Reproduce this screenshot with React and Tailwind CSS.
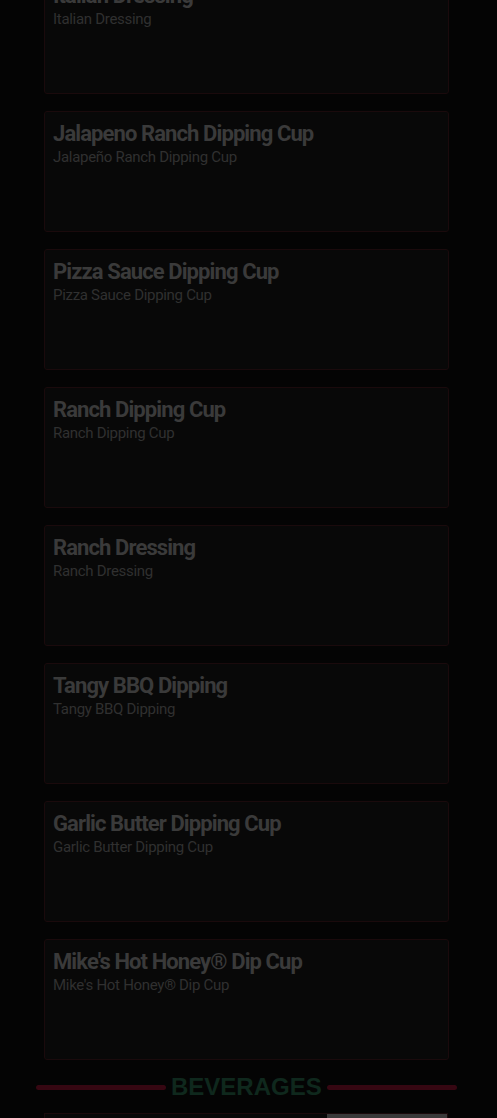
const items = [
  { title: "Italian Dressing", sub: "Italian Dressing" },
  { title: "Jalapeno Ranch Dipping Cup", sub: "Jalapeño Ranch Dipping Cup" },
  { title: "Pizza Sauce Dipping Cup", sub: "Pizza Sauce Dipping Cup" },
  { title: "Ranch Dipping Cup", sub: "Ranch Dipping Cup" },
  { title: "Ranch Dressing", sub: "Ranch Dressing" },
  { title: "Tangy BBQ Dipping", sub: "Tangy BBQ Dipping" },
  { title: "Garlic Butter Dipping Cup", sub: "Garlic Butter Dipping Cup" },
  { title: "Mike's Hot Honey® Dip Cup", sub: "Mike's Hot Honey® Dip Cup" },
];

function MenuCard({ title, sub }) {
  return (
    <div className="h-[121px] border border-[#1a0a0c] bg-[#080808] rounded-[3px] px-[8px] pt-[9px]">
      <h3 className="text-[22px] leading-[26px] font-bold text-[#3a3a3a] tracking-[-0.9px]">{title}</h3>
      <p className="text-[15px] leading-[20px] text-[#303030] tracking-[-0.3px]">{sub}</p>
    </div>
  );
}

export default function App() {
  return (
    <div className="min-h-[1118px] h-[1118px] overflow-hidden bg-[#040404] font-['Roboto',sans-serif]">
      <div className="w-[405px] ml-[44px] flex flex-col gap-[17px] -mt-[27px]">
        {items.map((it) => (
          <MenuCard key={it.title} title={it.title} sub={it.sub} />
        ))}
      </div>

      <div className="flex items-center ml-[36px] mt-[14px] gap-[5px]">
        <div className="w-[130px] h-[5px] rounded-full bg-[#360712]" />
        <h2 className="font-['Liberation_Sans',sans-serif] font-bold text-[24px] leading-[26px] text-[#0f281d]">BEVERAGES</h2>
        <div className="w-[130px] h-[5px] rounded-full bg-[#360712]" />
      </div>

      <div className="w-[404px] ml-[44px] mt-[13px] h-[120px] border border-[#1a0a0c] bg-[#080808] flex justify-end">
        <div className="w-[120px] h-full bg-[#3a3a3a]" />
      </div>
    </div>
  );
}
